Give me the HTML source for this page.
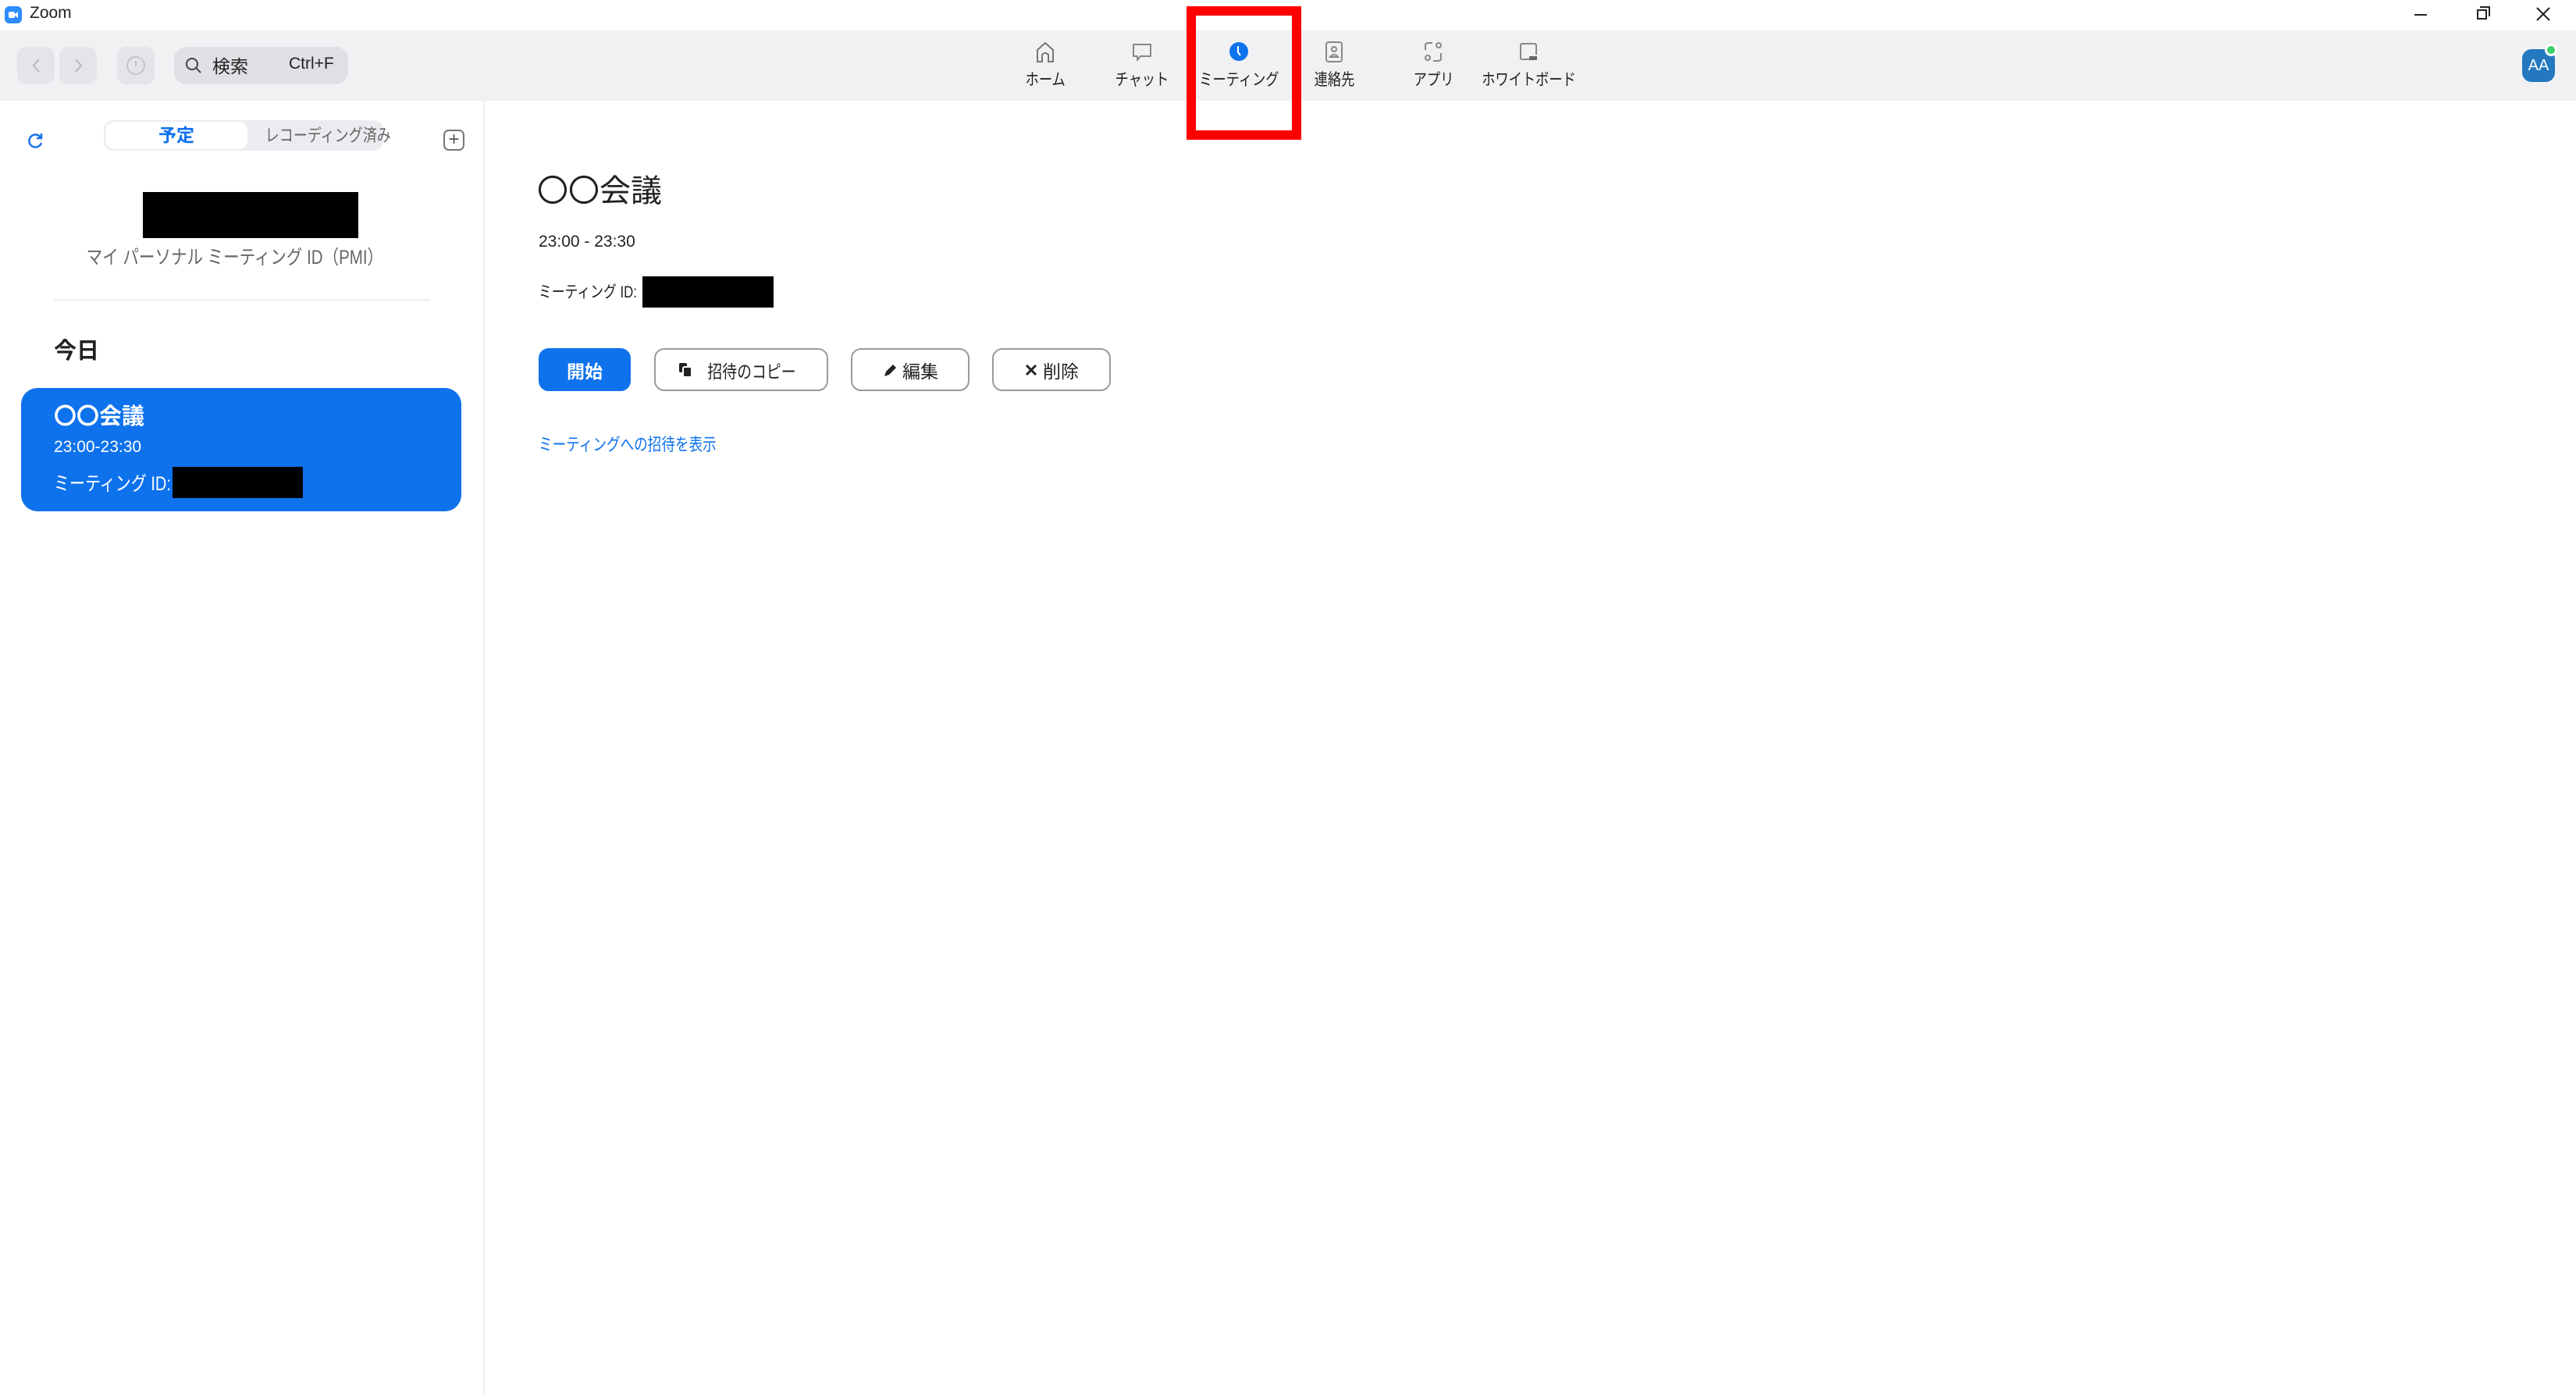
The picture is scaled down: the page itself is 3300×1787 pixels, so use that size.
<!DOCTYPE html>
<html><head><meta charset="utf-8"><style>
*{margin:0;padding:0;box-sizing:border-box}
body{width:3300px;height:1787px;position:relative;background:#fff;font-family:"Liberation Sans","Noto Sans CJK JP",sans-serif;overflow:hidden;color:#222}
.a{position:absolute;white-space:nowrap}
.n{display:inline-block;transform:scaleX(.8);transform-origin:left center}
.nc{display:inline-block;transform:scaleX(.82);transform-origin:center center}
.nav{position:absolute;top:52px;width:180px;text-align:center;font-size:21px;color:#222;white-space:nowrap}
.nav svg{display:block;margin:0 auto 4px}
.btn{position:absolute;top:446px;height:55px;border:2px solid #9a9a9a;border-radius:13px;background:#fff;font-size:23px;display:flex;align-items:center;justify-content:center;gap:6px;color:#222;white-space:nowrap}
</style></head><body>
<!-- title bar -->
<div class="a" style="left:6px;top:8px;width:22px;height:22px;border-radius:6px;background:#2d8cff"></div>
<div class="a" style="left:11px;top:15px;width:8px;height:8px;background:#fff;border-radius:2px"></div>
<div class="a" style="left:18px;top:15px;width:0;height:0;border-top:4px solid transparent;border-bottom:4px solid transparent;border-right:5px solid #fff"></div>
<div class="a" style="left:38px;top:5px;font-size:21px">Zoom</div>
<div class="a" style="left:3093px;top:18px;width:16px;height:2px;background:#222"></div>
<div class="a" style="left:3173px;top:12px;width:13px;height:13px;border:2px solid #222"></div>
<div class="a" style="left:3177px;top:8px;width:13px;height:13px;border-top:2px solid #222;border-right:2px solid #222"></div>
<svg class="a" style="left:3248px;top:8px" width="20" height="20"><path d="M2 2L18 18M18 2L2 18" stroke="#222" stroke-width="2"/></svg>
<!-- toolbar -->
<div class="a" style="left:0;top:39px;width:3300px;height:90px;background:#f1f1f4"></div>
<div class="a" style="left:22px;top:60px;width:48px;height:48px;border-radius:12px;background:#e4e4e9"></div>
<div class="a" style="left:76px;top:60px;width:48px;height:48px;border-radius:12px;background:#e4e4e9"></div>
<svg class="a" style="left:22px;top:60px" width="48" height="48"><path d="M28 16L21 24L28 32" stroke="#b8b8bf" stroke-width="2" fill="none"/></svg>
<svg class="a" style="left:76px;top:60px" width="48" height="48"><path d="M21 16L28 24L21 32" stroke="#b8b8bf" stroke-width="2" fill="none"/></svg>
<div class="a" style="left:150px;top:60px;width:48px;height:48px;border-radius:12px;background:#e4e4e9"></div>
<svg class="a" style="left:150px;top:60px" width="48" height="48"><circle cx="24" cy="24" r="11" stroke="#c2c2c8" stroke-width="2" fill="none"/><path d="M24 18V25" stroke="#c2c2c8" stroke-width="2"/></svg>
<div class="a" style="left:223px;top:60px;width:223px;height:48px;border-radius:16px;background:#dfdfe4"></div>
<svg class="a" style="left:236px;top:72px" width="24" height="24"><circle cx="10" cy="10" r="7" stroke="#444" stroke-width="2" fill="none"/><path d="M15 15L21 21" stroke="#444" stroke-width="2"/></svg>
<div class="a" style="left:272px;top:66px;font-size:23px">検索</div>
<div class="a" style="left:370px;top:70px;font-size:21px">Ctrl+F</div>

<div class="nav" style="left:1249px"><svg width="28" height="30" viewBox="0 0 28 30"><path d="M4 27V12L14 3L24 12V27H18V18Q14 14 10 18V27Z" fill="none" stroke="#777" stroke-width="2"/></svg><span class="nc">ホーム</span></div>
<div class="nav" style="left:1373px"><svg width="28" height="30" viewBox="0 0 28 30"><path d="M3 5H25V20H12L8 25V20H3Z" fill="none" stroke="#888" stroke-width="2" stroke-linejoin="round"/></svg><span class="nc">チャット</span></div>
<div class="nav" style="left:1497px"><svg width="28" height="30" viewBox="0 0 28 30"><circle cx="14" cy="14" r="12" fill="#0e72ed"/><path d="M13 7V15L16 19" stroke="#fff" stroke-width="2" fill="none"/></svg><span class="nc">ミーティング</span></div>
<div class="nav" style="left:1619px"><svg width="28" height="30" viewBox="0 0 28 30"><rect x="4" y="2" width="20" height="25" rx="3" fill="none" stroke="#888" stroke-width="2"/><circle cx="14" cy="11" r="3" fill="none" stroke="#888" stroke-width="2"/><path d="M9 21Q14 15 19 21Z" fill="none" stroke="#888" stroke-width="2"/></svg><span class="nc">連絡先</span></div>
<div class="nav" style="left:1746px"><svg width="28" height="30" viewBox="0 0 28 30"><path d="M4 12V6Q4 3 8 3H13M24 16V23Q24 26 20 26H14" fill="none" stroke="#888" stroke-width="2"/><circle cx="21" cy="6" r="3" fill="none" stroke="#888" stroke-width="2"/><circle cx="7" cy="22" r="3" fill="none" stroke="#888" stroke-width="2"/></svg><span class="nc">アプリ</span></div>
<div class="nav" style="left:1868px"><svg width="28" height="30" viewBox="0 0 28 30"><path d="M15 24H6Q4 24 4 22V6Q4 4 6 4H22Q24 4 24 6V18" fill="none" stroke="#888" stroke-width="2"/><rect x="15" y="20" width="10" height="5" fill="#666"/></svg><span class="nc">ホワイトボード</span></div>
<!-- red highlight -->
<div class="a" style="left:1520px;top:8px;width:147px;height:171px;border:12px solid #ff0000"></div>
<!-- avatar -->
<div class="a" style="left:3231px;top:63px;width:42px;height:42px;border-radius:12px;background:#2378c0;color:#fff;font-size:20px;text-align:center;line-height:42px">AA</div>
<div class="a" style="left:3260px;top:56px;width:16px;height:16px;border-radius:50%;background:#3ad06a;border:3px solid #fff"></div>

<!-- left panel -->
<div class="a" style="left:619px;top:129px;width:2px;height:1658px;background:#ececec"></div>
<svg class="a" style="left:33px;top:168px" width="24" height="24"><path d="M19 8A8 8 0 1 0 20 15" fill="none" stroke="#1a73e8" stroke-width="2.5"/><path d="M20 3V9H14" fill="none" stroke="#1a73e8" stroke-width="2.5"/></svg>
<div class="a" style="left:133px;top:154px;width:358px;height:39px;border-radius:12px;background:#ececf0"></div>
<div class="a" style="left:135px;top:156px;width:182px;height:35px;border-radius:11px;background:#fff;color:#0e72ed;font-weight:bold;font-size:23px;text-align:center;line-height:35px">予定</div>
<div class="a" style="left:322px;top:156px;width:166px;height:35px;color:#666;font-size:22px;text-align:center;line-height:35px"><span class="nc">レコーディング済み</span></div>
<div class="a" style="left:568px;top:166px;width:27px;height:27px;border:2px solid #777;border-radius:7px;text-align:center;line-height:22px;color:#555;font-size:24px">+</div>
<div class="a" style="left:183px;top:246px;width:276px;height:59px;background:#000"></div>
<div class="a" style="left:0;top:310px;width:601px;text-align:center;font-size:25px;color:#666"><span class="nc">マイ パーソナル ミーティング ID（PMI）</span></div>
<div class="a" style="left:69px;top:383px;width:481px;height:2px;background:#ececf0"></div>
<div class="a" style="left:69px;top:426px;font-size:29px;font-weight:bold">今日</div>
<div class="a" style="left:27px;top:497px;width:564px;height:158px;border-radius:21px;background:#0e72ed"></div>
<div class="a" style="left:69px;top:510px;font-size:29px;font-weight:bold;color:#fff">〇〇会議</div>
<div class="a" style="left:69px;top:561px;font-size:21px;color:#fff">23:00-23:30</div>
<div class="a" style="left:69px;top:600px;font-size:25px;color:#fff"><span class="n">ミーティング ID:</span></div>
<div class="a" style="left:221px;top:598px;width:167px;height:40px;background:#000"></div>

<!-- right content -->
<div class="a" style="left:688px;top:212px;font-size:40px">〇〇会議</div>
<div class="a" style="left:690px;top:298px;font-size:21px">23:00 - 23:30</div>
<div class="a" style="left:690px;top:358px;font-size:21px"><span class="n">ミーティング ID:</span></div>
<div class="a" style="left:823px;top:354px;width:168px;height:40px;background:#000"></div>
<div class="btn" style="left:690px;width:118px;background:#0e72ed;border-color:#0e72ed;color:#fff;font-weight:bold">開始</div>
<div class="btn" style="left:838px;width:223px"><svg width="20" height="22"><rect x="2" y="2" width="10" height="12" rx="2" fill="#222"/><rect x="7" y="7" width="11" height="13" rx="2" fill="#222" stroke="#fff" stroke-width="2"/></svg><span class="nc">招待のコピー</span></div>
<div class="btn" style="left:1090px;width:152px"><svg width="20" height="22"><path d="M3 19L5 13L14 4L18 8L9 17Z" fill="#222"/></svg>編集</div>
<div class="btn" style="left:1271px;width:152px"><svg width="18" height="18"><path d="M3 3L15 15M15 3L3 15" stroke="#222" stroke-width="3"/></svg>削除</div>
<div class="a" style="left:690px;top:552px;font-size:22px;color:#0e72ed"><span class="n">ミーティングへの招待を表示</span></div>
</body></html>
